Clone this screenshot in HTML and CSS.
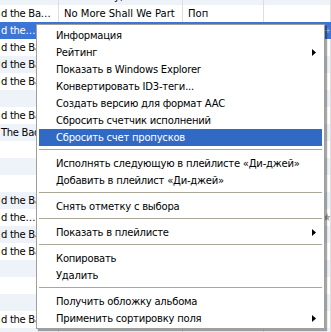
FILE: index.html
```html
<!DOCTYPE html>
<html lang="ru">
<head>
  <meta charset="UTF-8" />
  <title>iTunes — контекстное меню</title>
  <link rel="stylesheet" href="styles.css">
</head>
<body>
  <div class="list">
    <div class="row alt"><span class="cell"></span><span class="cell">Nature Boy, Babe You Turn</span><span class="cell"></span><span class="cell"></span></div>
    <div class="row"><span class="cell">d the Ba…</span><span class="cell">No More Shall We Part</span><span class="cell">Поп</span><span class="cell"></span></div>
    <div class="row sel"><span class="cell">d the…</span><span class="cell"></span><span class="cell"></span><span class="cell"><span class="plus">+</span></span></div>
    <div class="row"><span class="cell">d the Ba…</span><span class="cell"></span><span class="cell"></span><span class="cell"></span></div>
    <div class="row alt"><span class="cell">d the Ba…</span><span class="cell"></span><span class="cell"></span><span class="cell"></span></div>
    <div class="row"><span class="cell">d the Ba…</span><span class="cell"></span><span class="cell"></span><span class="cell"></span></div>
    <div class="row alt"><span class="cell"></span><span class="cell"></span><span class="cell"></span><span class="cell"></span></div>
    <div class="row"><span class="cell">d the Ba…</span><span class="cell"></span><span class="cell"></span><span class="cell"></span></div>
    <div class="row alt"><span class="cell">The Bad Seeds</span><span class="cell"></span><span class="cell"></span><span class="cell"></span></div>
    <div class="row"><span class="cell"></span><span class="cell"></span><span class="cell"></span><span class="cell"></span></div>
    <div class="row alt"><span class="cell"></span><span class="cell"></span><span class="cell"></span><span class="cell"></span></div>
    <div class="row"><span class="cell"></span><span class="cell"></span><span class="cell"></span><span class="cell"></span></div>
    <div class="row alt"><span class="cell">d the Ba…</span><span class="cell"></span><span class="cell"></span><span class="cell"></span></div>
    <div class="row"><span class="cell">d the…</span><span class="cell"></span><span class="cell"></span><span class="cell"><span class="star">★</span></span></div>
    <div class="row alt"><span class="cell">d the Ba…</span><span class="cell"></span><span class="cell"></span><span class="cell"></span></div>
    <div class="row"><span class="cell">d the Ba…</span><span class="cell"></span><span class="cell"></span><span class="cell"></span></div>
    <div class="row alt"><span class="cell"></span><span class="cell"></span><span class="cell"></span><span class="cell"></span></div>
    <div class="row"><span class="cell"></span><span class="cell"></span><span class="cell"></span><span class="cell"></span></div>
    <div class="row alt"><span class="cell"></span><span class="cell"></span><span class="cell"></span><span class="cell"></span></div>
    <div class="row"><span class="cell">d the Ba…</span><span class="cell"></span><span class="cell"></span><span class="cell"></span></div>
    <div class="row alt"><span class="cell">d the…</span><span class="cell">The Ship Song</span><span class="cell"></span><span class="cell"></span></div>
  </div>

  <div class="menu">
    <div class="item">Информация</div>
    <div class="item sub">Рейтинг</div>
    <div class="item">Показать в Windows Explorer</div>
    <div class="item">Конвертировать ID3-теги...</div>
    <div class="item">Создать версию для формат AAC</div>
    <div class="item">Сбросить счетчик исполнений</div>
    <div class="item hot">Сбросить счет пропусков</div>
    <div class="sep"></div>
    <div class="item">Исполнять следующую в плейлисте «Ди-джей»</div>
    <div class="item">Добавить в плейлист «Ди-джей»</div>
    <div class="sep"></div>
    <div class="item">Снять отметку с выбора</div>
    <div class="sep"></div>
    <div class="item sub">Показать в плейлисте</div>
    <div class="sep"></div>
    <div class="item">Копировать</div>
    <div class="item">Удалить</div>
    <div class="sep"></div>
    <div class="item">Получить обложку альбома</div>
    <div class="item sub">Применить сортировку поля</div>
  </div>
</body>
</html>
```

FILE: styles.css
```css
* { box-sizing: border-box; }
html, body {
  margin: 0;
  padding: 0;
  height: 100%;
  overflow: hidden;
  background: #fff;
  font-family: "DejaVu Sans", sans-serif;
  font-size: 10px;
  color: #000;
}
.list {
  margin-top: -12px;
}
.row {
  display: grid;
  grid-template-columns: 59px 124px 81px 1fr;
  height: 17px;
  line-height: 17px;
  background: #fff;
}
.row.alt {
  background: #eef3fa;
}
.row.sel {
  background: #3d75d6;
  color: #fff;
}
.cell {
  border-right: 1px solid #dedede;
  padding-left: 5px;
  white-space: nowrap;
  overflow: hidden;
  position: relative;
}
.cell:first-child {
  padding-left: 1px;
  letter-spacing: -0.3px;
}
.row.sel .cell {
  border-right-color: #3d75d6;
}
.plus {
  position: absolute;
  left: 60px;
  top: 0;
  color: #9dbbee;
  font-size: 9px;
}
.star {
  position: absolute;
  left: 58px;
  top: 0;
  color: #a8a8a8;
  font-size: 11px;
}
.menu {
  position: absolute;
  left: 36px;
  top: 24px;
  width: 289px;
  background: #fff;
  border: 1px solid #a09f9c;
  padding: 2px 2px 1px;
  box-shadow: 2px 2px 1px rgba(0, 0, 0, 0.35);
  letter-spacing: -0.22px;
}
.item {
  position: relative;
  height: 17px;
  line-height: 17px;
  padding-left: 17px;
  white-space: nowrap;
}
.item.hot {
  background: #316ac5;
  color: #fff;
}
.item.sub::after {
  content: "";
  position: absolute;
  right: 6px;
  top: 5px;
  width: 4px;
  height: 7px;
  background: #000;
  clip-path: polygon(0 0, 100% 50%, 0 100%);
}
.sep {
  height: 9px;
  padding-top: 3px;
}
.sep::before {
  content: "";
  display: block;
  height: 1px;
  background: #aca899;
}
```
